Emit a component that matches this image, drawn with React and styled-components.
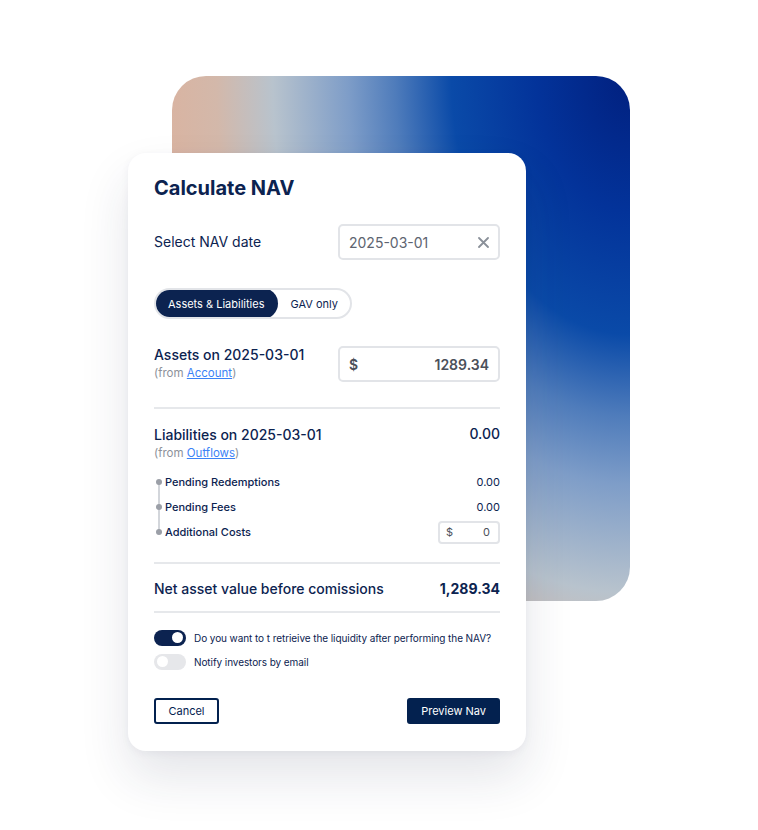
import React from 'react';
import styled, {createGlobalStyle} from 'styled-components';

const COLORS = {
	NAVY: '#0c2350',
	NAVY_BTN: '#03214f',
	TEXT_GREY: '#5d6470',
	MUTED: '#8c919a',
	BORDER: '#e2e4e8',
	DIVIDER: '#e6e8eb',
	LINK: '#3b82f6',
	WHITE: '#ffffff'
};

const GlobalStyle = createGlobalStyle`
	* { box-sizing: border-box; }
	html, body { margin: 0; padding: 0; background: #fff; }
	body {
		font-family: 'Inter', 'Noto Sans', 'Liberation Sans', sans-serif;
		color: ${COLORS.NAVY};
	}
`;

const Stage = styled.div`
	position: relative;
	width: 758px;
	height: 830px;
	padding: 153px 0 0 128px;
	overflow: hidden;
`;

// decorative gradient slab sitting behind the card
const Backdrop = styled.div`
	position: absolute;
	left: 172px;
	top: 76px;
	width: 458px;
	height: 525px;
	border-radius: 34px;
	background: radial-gradient(
		ellipse 470px 680px at 100% 0%,
		#01207f 0%,
		#03339a 20%,
		#0a4aa8 38%,
		#4f7cbb 50%,
		#7e9dc8 60%,
		#b8c3cd 76%,
		#d3b8aa 88%,
		#dab3a0 100%
	);
`;

const Card = styled.div`
	position: relative;
	z-index: 1;
	width: 398px;
	height: 598px;
	background: ${COLORS.WHITE};
	border-radius: 18px;
	padding: 23px 26px 26px;
	display: flex;
	flex-direction: column;
	box-shadow: 0 26px 50px rgba(30, 42, 70, 0.12), 0 2px 8px rgba(30, 42, 70, 0.05);
`;

const Title = styled.h1`
	margin: 0;
	font-size: 20px;
	line-height: 24px;
	font-weight: 700;
	color: ${COLORS.NAVY};
`;

const Row = styled.div`
	display: flex;
	justify-content: space-between;
	align-items: ${(p) => p.$align || 'center'};
	margin-top: ${(p) => p.$mt || 0}px;
`;

const LabelGroup = styled.div`
	margin-top: ${(p) => p.$mt || 0}px;
`;

const Label = styled.div`
	font-size: 14px;
	line-height: 20px;
	font-weight: ${(p) => (p.$strong ? 500 : 400)};
	color: ${COLORS.NAVY};
`;

const SubLabel = styled.div`
	font-size: 11.5px;
	line-height: 16px;
	color: ${COLORS.MUTED};
`;

const Link = styled.a`
	color: ${COLORS.LINK};
	text-decoration: underline;
	cursor: pointer;
`;

const Field = styled.div`
	width: 162px;
	height: 36px;
	border: 2px solid ${COLORS.BORDER};
	border-radius: 5px;
	display: flex;
	align-items: center;
	justify-content: space-between;
	padding: 0 9px 0 9px;
	font-size: 14px;
	color: ${COLORS.TEXT_GREY};
`;

const SmallField = styled(Field)`
	width: 62px;
	height: 23px;
	font-size: 11px;
	padding: 0 8px 0 6px;
	border-radius: 4px;
`;

const Currency = styled.span`
	font-weight: ${(p) => (p.$bold ? 600 : 400)};
	color: #4b505a;
`;

const Amount = styled.span`
	font-weight: ${(p) => (p.$bold ? 600 : 400)};
	color: #4b505a;
`;

const Segmented = styled.div`
	display: inline-flex;
	align-self: flex-start;
	margin-top: 28px;
	height: 31px;
	border: 2px solid ${COLORS.BORDER};
	border-radius: 16px;
	overflow: hidden;
`;

const Segment = styled.button`
	border: none;
	margin: ${(p) => (p.$active ? '-2px 0 -2px -2px' : 0)};
	height: ${(p) => (p.$active ? '31px' : '27px')};
	padding: ${(p) => (p.$active ? '0 14px' : '0 12px')};
	border-radius: 16px;
	background: ${(p) => (p.$active ? COLORS.NAVY : 'transparent')};
	color: ${(p) => (p.$active ? COLORS.WHITE : COLORS.NAVY)};
	font-family: inherit;
	font-size: 11px;
	cursor: pointer;
`;

const Divider = styled.hr`
	border: none;
	height: 2px;
	background: ${COLORS.DIVIDER};
	margin: ${(p) => p.$mt}px 0 0;
	width: 100%;
`;

const Value = styled.div`
	font-size: ${(p) => p.$size || 14}px;
	font-weight: ${(p) => p.$weight || 500};
	color: ${COLORS.NAVY};
`;

const Timeline = styled.div`
	position: relative;
	margin-top: 8.5px;
	display: flex;
	flex-direction: column;

	&::before {
		content: '';
		position: absolute;
		left: 3.5px;
		top: 12.5px;
		bottom: 12.5px;
		width: 2px;
		background: #d3d6db;
	}
`;

const TimelineItem = styled.div`
	position: relative;
	height: 25px;
	display: flex;
	align-items: center;
	justify-content: space-between;
	padding-left: 11px;
	font-size: 11px;
	font-weight: 500;
	color: ${COLORS.NAVY};

	&::before {
		content: '';
		position: absolute;
		left: 1.5px;
		top: 50%;
		width: 6px;
		height: 6px;
		margin-top: -3px;
		border-radius: 50%;
		background: #9b9fa7;
	}
`;

const Toggles = styled.div`
	margin-top: 17px;
	display: flex;
	flex-direction: column;
	gap: 8px;
`;

const ToggleRow = styled.label`
	display: flex;
	align-items: center;
	gap: 8px;
	font-size: 10px;
	letter-spacing: -0.08px;
	color: ${COLORS.NAVY};
`;

const Switch = styled.span`
	position: relative;
	width: 32px;
	height: 16px;
	border-radius: 8px;
	background: ${(p) => (p.$on ? COLORS.NAVY : '#e6e7ea')};
	flex-shrink: 0;

	&::after {
		content: '';
		position: absolute;
		top: 2.5px;
		left: ${(p) => (p.$on ? '18px' : '3px')};
		width: 11px;
		height: 11px;
		border-radius: 50%;
		background: #fff;
	}
`;

const Actions = styled.div`
	margin-top: 28px;
	display: flex;
	justify-content: space-between;
`;

const Button = styled.button`
	height: 26px;
	min-width: ${(p) => (p.$primary ? 91 : 65)}px;
	padding: 0 12px;
	border-radius: 3px;
	border: 2px solid ${COLORS.NAVY_BTN};
	background: ${(p) => (p.$primary ? COLORS.NAVY_BTN : COLORS.WHITE)};
	color: ${(p) => (p.$primary ? COLORS.WHITE : COLORS.NAVY_BTN)};
	font-family: inherit;
	font-size: 11px;
	cursor: pointer;
`;

const ClearIcon = () => (
	<svg width="11" height="11" viewBox="0 0 11 11" fill="none">
		<path d="M1 1L10 10M10 1L1 10" stroke="#8a9099" strokeWidth="1.8" strokeLinecap="round" />
	</svg>
);

export default function App() {
	return (
		<>
			<GlobalStyle />
			<Stage>
				<Backdrop />
				<Card>
					<Title>Calculate NAV</Title>

					<Row $mt={24}>
						<Label>Select NAV date</Label>
						<Field>
							<span>2025-03-01</span>
							<ClearIcon />
						</Field>
					</Row>

					<Segmented>
						<Segment $active>Assets &amp; Liabilities</Segment>
						<Segment>GAV only</Segment>
					</Segmented>

					<Row $mt={27} $align="flex-start">
						<LabelGroup $mt={-1}>
							<Label $strong>Assets on 2025-03-01</Label>
							<SubLabel>
								(from <Link>Account</Link>)
							</SubLabel>
						</LabelGroup>
						<Field>
							<Currency $bold>$</Currency>
							<Amount $bold>1289.34</Amount>
						</Field>
					</Row>

					<Divider $mt={25} />

					<Row $mt={16} $align="flex-start">
						<LabelGroup>
							<Label $strong>Liabilities on 2025-03-01</Label>
							<SubLabel>
								(from <Link>Outflows</Link>)
							</SubLabel>
						</LabelGroup>
						<Value>0.00</Value>
					</Row>

					<Timeline>
						<TimelineItem>
							<span>Pending Redemptions</span>
							<Value $size={11} $weight={400}>0.00</Value>
						</TimelineItem>
						<TimelineItem>
							<span>Pending Fees</span>
							<Value $size={11} $weight={400}>0.00</Value>
						</TimelineItem>
						<TimelineItem>
							<span>Additional Costs</span>
							<SmallField>
								<Currency>$</Currency>
								<Amount>0</Amount>
							</SmallField>
						</TimelineItem>
					</Timeline>

					<Divider $mt={17} />

					<Row $mt={15}>
						<Label $strong>Net asset value before comissions</Label>
						<Value $weight={700}>1,289.34</Value>
					</Row>

					<Divider $mt={12} />

					<Toggles>
						<ToggleRow>
							<Switch $on />
							Do you want to t retrieive the liquidity after performing the NAV?
						</ToggleRow>
						<ToggleRow>
							<Switch />
							Notify investors by email
						</ToggleRow>
					</Toggles>

					<Actions>
						<Button>Cancel</Button>
						<Button $primary>Preview Nav</Button>
					</Actions>
				</Card>
			</Stage>
		</>
	);
}
